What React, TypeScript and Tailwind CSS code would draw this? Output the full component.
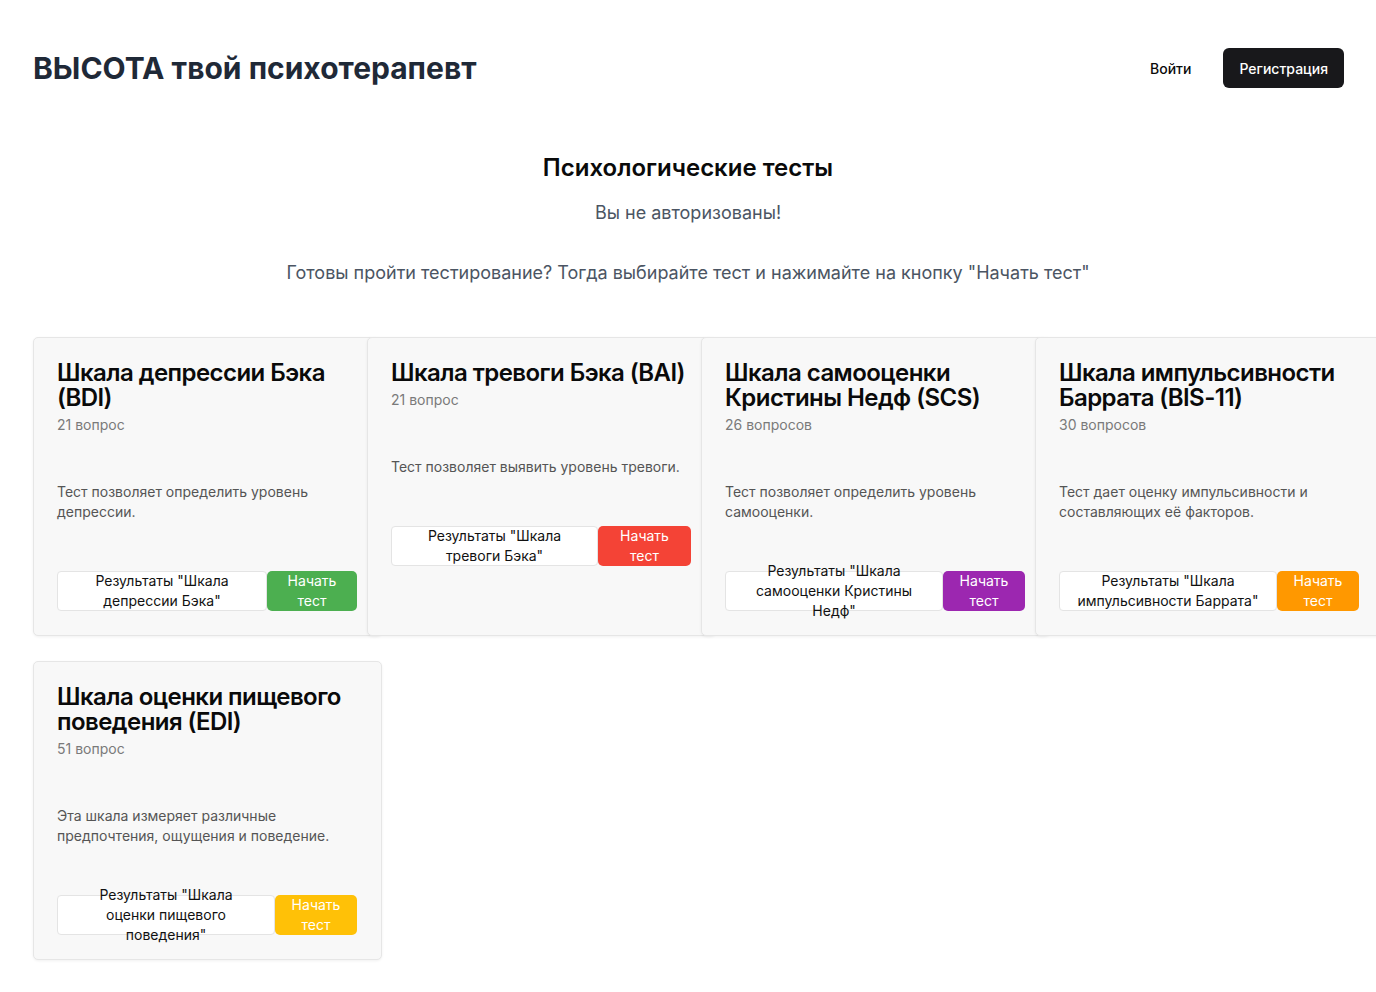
import React from "react";

type Test = {
  title: string;
  count: string;
  desc: string;
  results: string;
  resW: string;
  startW: string;
  color: string;
};

const tests: Test[] = [
  {
    title: "Шкала депрессии Бэка (BDI)",
    count: "21 вопрос",
    desc: "Тест позволяет определить уровень депрессии.",
    results: 'Результаты "Шкала депрессии Бэка"',
    resW: "w-[210px]",
    startW: "w-[90px]",
    color: "bg-[#4caf50]",
  },
  {
    title: "Шкала тревоги Бэка (BAI)",
    count: "21 вопрос",
    desc: "Тест позволяет выявить уровень тревоги.",
    results: 'Результаты "Шкала тревоги Бэка"',
    resW: "w-[207px]",
    startW: "w-[93px]",
    color: "bg-[#f44336]",
  },
  {
    title: "Шкала самооценки Кристины Недф (SCS)",
    count: "26 вопросов",
    desc: "Тест позволяет определить уровень самооценки.",
    results: 'Результаты "Шкала самооценки Кристины Недф"',
    resW: "w-[218px]",
    startW: "w-[82px]",
    color: "bg-[#9c27b0]",
  },
  {
    title: "Шкала импульсивности Баррата (BIS-11)",
    count: "30 вопросов",
    desc: "Тест дает оценку импульсивности и составляющих её факторов.",
    results: 'Результаты "Шкала импульсивности Баррата"',
    resW: "w-[218px]",
    startW: "w-[82px]",
    color: "bg-[#ff9800]",
  },
  {
    title: "Шкала оценки пищевого поведения (EDI)",
    count: "51 вопрос",
    desc: "Эта шкала измеряет различные предпочтения, ощущения и поведение.",
    results: 'Результаты "Шкала оценки пищевого поведения"',
    resW: "w-[218px]",
    startW: "w-[82px]",
    color: "bg-[#ffc107]",
  },
];

function Card({ t }: { t: Test }) {
  return (
    <div className="w-[349px] rounded-[5px] border border-[#e6e6e6] bg-[#f8f8f8] pl-[23px] pr-6 pt-[22px] pb-6 shadow-[0_1px_3px_rgba(0,0,0,0.06)]">
      <h3 className="text-[24px] leading-[25px] font-semibold text-[#0a0a0a] tracking-[-0.55px]">
        {t.title}
      </h3>
      <div className="mt-[5px] text-[14px] leading-5 text-[#7a7a7a]">{t.count}</div>
      <p className="mt-[47px] text-[14px] leading-5 text-[#555555]">{t.desc}</p>
      <div className="mt-[49px] flex w-[300px]">
        <button
          className={`${t.resW} h-10 flex items-center justify-center rounded-[4px] border border-[#e4e4e4] bg-white px-4 text-center text-[14px] leading-5 text-[#111111]`}
        >
          <span>{t.results}</span>
        </button>
        <button
          className={`${t.startW} ${t.color} h-10 flex items-center justify-center rounded-[5px] px-3 text-center text-[14px] leading-5 text-white`}
        >
          <span>Начать тест</span>
        </button>
      </div>
    </div>
  );
}

export default function App() {
  return (
    <div
      className="min-h-screen w-full overflow-hidden bg-white pb-8"
      style={{ fontFamily: "Inter, 'Noto Sans', sans-serif" }}
    >
      <header className="flex items-center justify-between pl-[33px] pr-8 pt-12">
        <h1 className="text-[30px] leading-10 font-bold text-[#1f2937]">
          ВЫСОТА твой психотерапевт
        </h1>
        <div className="flex items-center gap-4">
          <button className="h-10 px-4 text-[14px] font-medium text-[#0a0a0a]">Войти</button>
          <button className="h-10 rounded-md bg-[#18181b] px-4 text-[14px] font-medium text-white">
            Регистрация
          </button>
        </div>
      </header>

      <main className="mt-16">
        <h2 className="text-center text-[24px] leading-8 font-semibold text-[#0a0a0a]">
          Психологические тесты
        </h2>
        <p className="mt-[15px] text-center text-[18px] leading-7 text-[#4b5563]">
          Вы не авторизованы!
        </p>
        <p className="mt-8 text-center text-[18px] leading-7 text-[#4b5563]">
          Готовы пройти тестирование? Тогда выбирайте тест и нажимайте на кнопку "Начать тест"
        </p>

        <div className="mt-[50px] ml-[33px] grid grid-cols-[repeat(4,334px)] gap-y-[25px]">
          {tests.map((t) => (
            <Card key={t.title} t={t} />
          ))}
        </div>
      </main>
    </div>
  );
}
